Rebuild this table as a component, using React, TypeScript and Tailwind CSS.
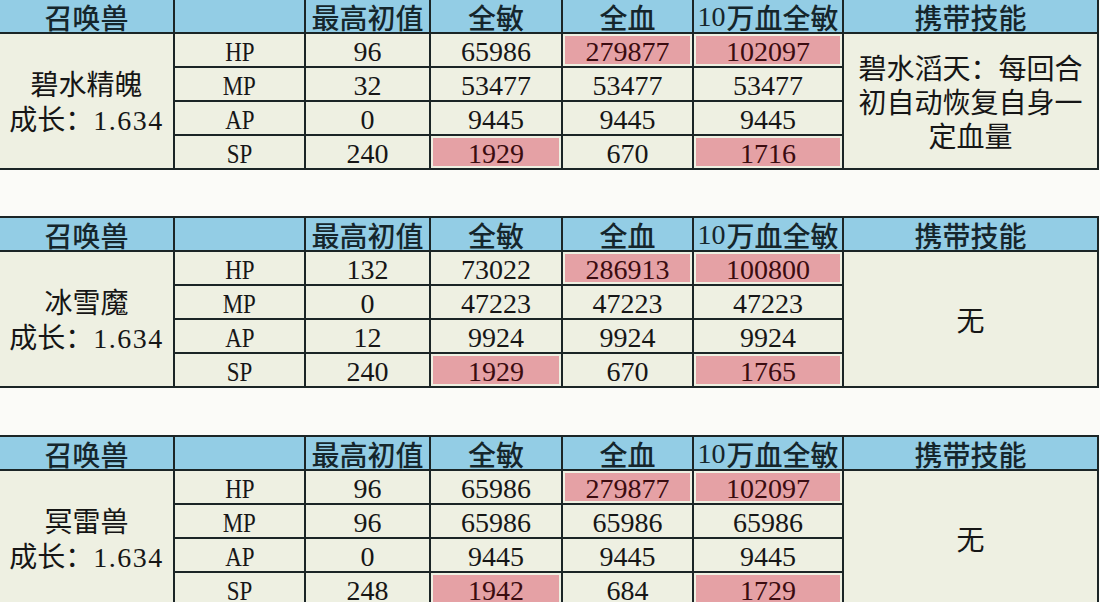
import React from "react";

type Row = { label: string; vals: [string, string, string, string]; pink: [boolean, boolean, boolean, boolean] };
type Pet = { name: string; growth: string; rows: Row[]; skill: string[] };

const pets: Pet[] = [
  {
    name: "碧水精魄",
    growth: "1.634",
    rows: [
      { label: "HP", vals: ["96", "65986", "279877", "102097"], pink: [false, false, true, true] },
      { label: "MP", vals: ["32", "53477", "53477", "53477"], pink: [false, false, false, false] },
      { label: "AP", vals: ["0", "9445", "9445", "9445"], pink: [false, false, false, false] },
      { label: "SP", vals: ["240", "1929", "670", "1716"], pink: [false, true, false, true] },
    ],
    skill: ["碧水滔天：每回合", "初自动恢复自身一", "定血量"],
  },
  {
    name: "冰雪魔",
    growth: "1.634",
    rows: [
      { label: "HP", vals: ["132", "73022", "286913", "100800"], pink: [false, false, true, true] },
      { label: "MP", vals: ["0", "47223", "47223", "47223"], pink: [false, false, false, false] },
      { label: "AP", vals: ["12", "9924", "9924", "9924"], pink: [false, false, false, false] },
      { label: "SP", vals: ["240", "1929", "670", "1765"], pink: [false, true, false, true] },
    ],
    skill: ["无"],
  },
  {
    name: "冥雷兽",
    growth: "1.634",
    rows: [
      { label: "HP", vals: ["96", "65986", "279877", "102097"], pink: [false, false, true, true] },
      { label: "MP", vals: ["96", "65986", "65986", "65986"], pink: [false, false, false, false] },
      { label: "AP", vals: ["0", "9445", "9445", "9445"], pink: [false, false, false, false] },
      { label: "SP", vals: ["248", "1942", "684", "1729"], pink: [false, true, false, true] },
    ],
    skill: ["无"],
  },
];

const cjk = "font-['Noto_Sans_CJK_SC',sans-serif]";
const num = "font-['Liberation_Serif','Noto_Sans_CJK_SC',serif]";

function Header({ children }: { children: React.ReactNode }) {
  return (
    <div className={`bg-[#93cde5] flex items-end justify-center pb-[1px] text-[28px] leading-none text-[#15262c] font-medium ${cjk}`}>
      {children}
    </div>
  );
}

function ValueCell({ v, pink }: { v: string; pink: boolean }) {
  return (
    <div className="bg-[#eef0e2] p-[2px]">
      <div
        className={`h-full w-full flex items-center justify-center pt-[3px] text-[28px] leading-none ${num} ${
          pink ? "bg-[#e5a1a5] text-[#3b0c10]" : "text-[#161616]"
        }`}
      >
        {v}
      </div>
    </div>
  );
}

function PetTable({ pet, className }: { pet: Pet; className: string }) {
  return (
    <div
      className={`-ml-[2px] w-[1101px] border-2 border-[#1b2526] bg-[#1b2526] grid grid-cols-[173px_129px_123px_130px_129px_148px_253px] grid-rows-[32px_32px_32px_32px_32px] gap-[2px] ${className}`}
    >
      <Header>召唤兽</Header>
      <Header>{""}</Header>
      <Header>最高初值</Header>
      <Header>全敏</Header>
      <Header>全血</Header>
      <Header>
        <span className={`${num} font-normal mr-[1px]`}>10</span>万血全敏
      </Header>
      <Header>携带技能</Header>

      <div
        className={`row-span-4 col-start-1 row-start-2 bg-[#eef0e2] flex flex-col items-center justify-center text-[28px] leading-[35px] text-[#161616] ${cjk}`}
      >
        <div className="pt-[2px]">{pet.name}</div>
        <div className="whitespace-nowrap">
          成长：<span className={`${num} tracking-[1.5px]`}>{pet.growth}</span>
        </div>
      </div>

      {pet.rows.map((r, i) => (
        <React.Fragment key={i}>
          <div className={`col-start-2 bg-[#eef0e2] flex items-center justify-center pt-[3px] text-[28px] leading-none text-[#161616] ${num}`}>
            <span className="inline-block scale-x-[0.82]">{r.label}</span>
          </div>
          {r.vals.map((v, j) => (
            <ValueCell key={j} v={v} pink={r.pink[j]} />
          ))}
          {i === 0 && (
            <div
              className={`row-span-4 col-start-7 row-start-2 bg-[#eef0e2] flex flex-col items-center justify-center text-[28px] leading-[34px] text-[#161616] ${cjk}`}
            >
              {pet.skill.map((l, k) => (
                <div key={k} className="whitespace-nowrap">
                  {l}
                </div>
              ))}
            </div>
          )}
        </React.Fragment>
      ))}
    </div>
  );
}

export default function App() {
  return (
    <div className="w-[1100px] h-[602px] overflow-hidden bg-[#fbfbf8]">
      <PetTable pet={pets[0]} className="-mt-[2px]" />
      <PetTable pet={pets[1]} className="mt-[46px]" />
      <PetTable pet={pets[2]} className="mt-[47px]" />
    </div>
  );
}
